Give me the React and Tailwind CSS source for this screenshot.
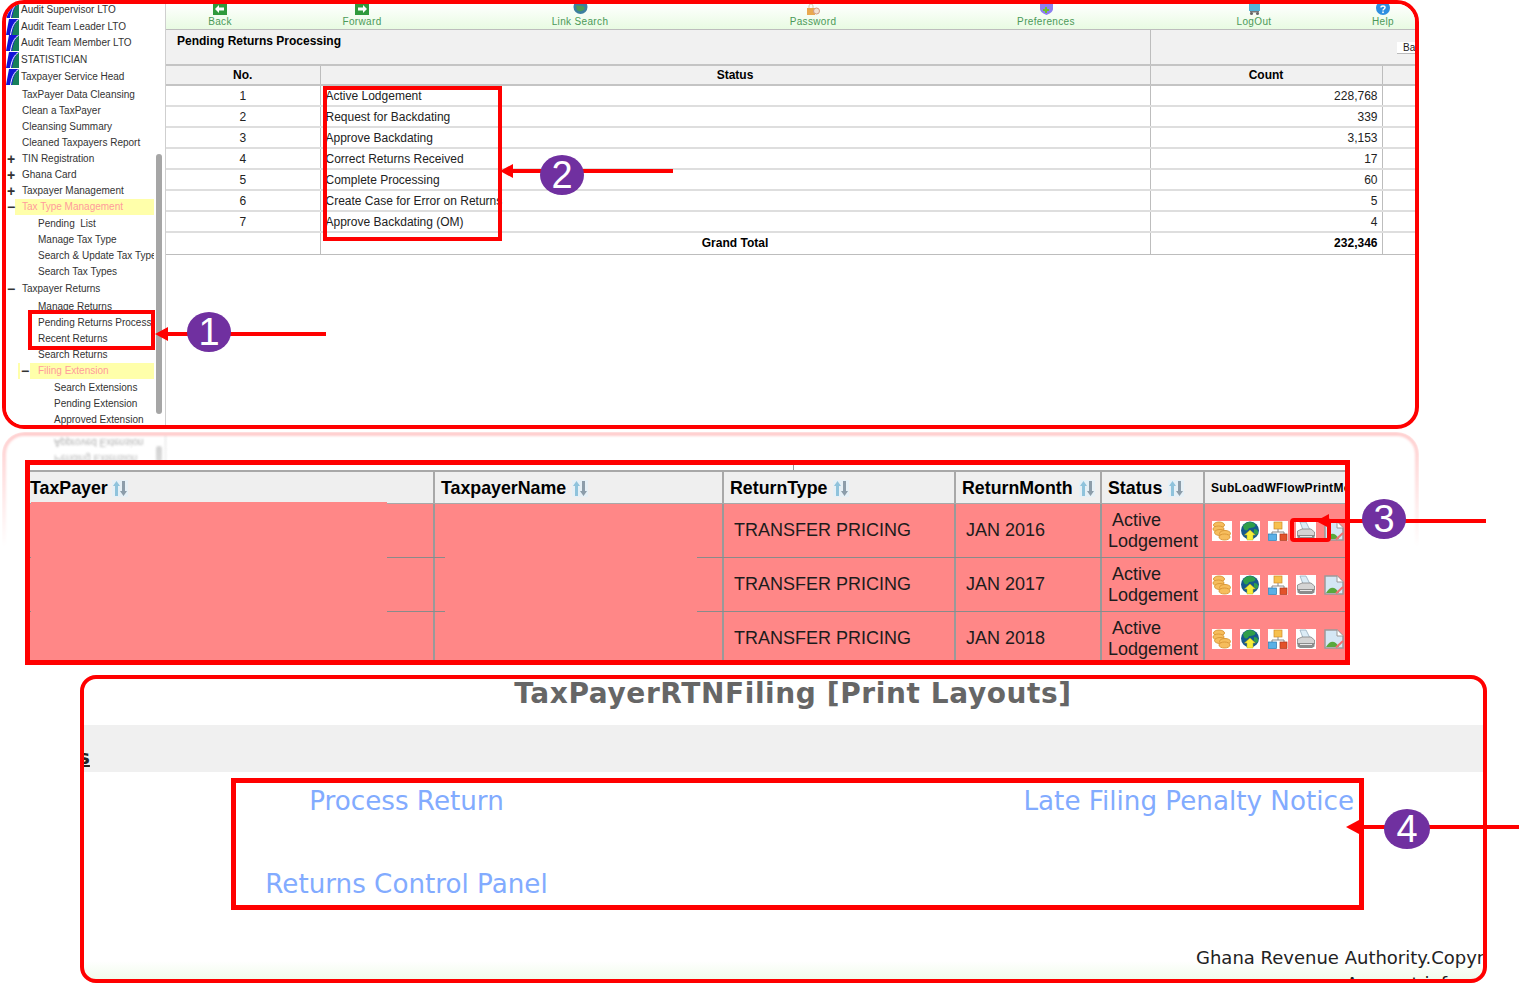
const sans = "[font-family:'Liberation_Sans',Arial,sans-serif]";
const dejavu = "[font-family:'DejaVu_Sans',Verdana,sans-serif]";

const roles = [
  "Audit Supervisor LTO",
  "Audit Team Leader LTO",
  "Audit Team Member LTO",
  "STATISTICIAN",
  "Taxpayer Service Head",
];

const menu = [
  { label: "TaxPayer Data Cleansing", pad: "pl-4" },
  { label: "Clean a TaxPayer", pad: "pl-4" },
  { label: "Cleansing Summary", pad: "pl-4" },
  { label: "Cleaned Taxpayers Report", pad: "pl-4" },
  { label: "TIN Registration", pad: "pl-4", sign: "+" },
  { label: "Ghana Card", pad: "pl-4", sign: "+" },
  { label: "Taxpayer Management", pad: "pl-4", sign: "+" },
  { label: "Tax Type Management", pad: "pl-4", sign: "-", hot: true },
  { label: "Pending  List", pad: "pl-8", gap: "mt-px" },
  { label: "Manage Tax Type", pad: "pl-8" },
  { label: "Search & Update Tax Type", pad: "pl-8" },
  { label: "Search Tax Types", pad: "pl-8" },
  { label: "Taxpayer Returns", pad: "pl-4", sign: "-", gap: "mt-px" },
  { label: "Manage Returns", pad: "pl-8", gap: "mt-0.5" },
  { label: "Pending Returns Processing", pad: "pl-8" },
  { label: "Recent Returns", pad: "pl-8" },
  { label: "Search Returns", pad: "pl-8" },
  { label: "Filing Extension", pad: "pl-8", sign: "-", hot: true, inner: true },
  { label: "Search Extensions", pad: "pl-12", gap: "mt-px" },
  { label: "Pending Extension", pad: "pl-12" },
  { label: "Approved Extension", pad: "pl-12" },
];

const statusRows = [
  ["1", "Active Lodgement", "228,768"],
  ["2", "Request for Backdating", "339"],
  ["3", "Approve Backdating", "3,153"],
  ["4", "Correct Returns Received", "17"],
  ["5", "Complete Processing", "60"],
  ["6", "Create Case for Error on Returns", "5"],
  ["7", "Approve Backdating (OM)", "4"],
];

const months = ["JAN 2016", "JAN 2017", "JAN 2018"];

function RoleIcon() {
  return (
    <svg width="13" height="16" viewBox="0 0 13 16" className="shrink-0">
      <path d="M3 0H13V16H0Z" fill="#1414d8" />
      <path d="M13 0C9 3 7 9 6 16H13Z" fill="#16805c" />
      <path d="M12.500 0.500C8 3 5.500 9 4.500 16" stroke="#fff" strokeWidth="1" fill="none" />
    </svg>
  );
}

function TopIcon({ kind }) {
  if (kind === "back" || kind === "forward") {
    return (
      <svg width="14" height="11" viewBox="0 0 14 11">
        <rect width="14" height="11" fill="#2f9a3c" />
        {kind === "back" ? (
          <path d="M2 5L6 1V3.500H11V6.500H6V9Z" fill="#fff" />
        ) : (
          <path d="M12 5L8 1V3.500H3V6.500H8V9Z" fill="#fff" />
        )}
      </svg>
    );
  }
  if (kind === "search") {
    return (
      <svg width="15" height="11" viewBox="0 0 15 11">
        <circle cx="7.500" cy="3" r="7" fill="#3c7fa0" />
        <path d="M3 1C6 3 9 0 12 4C10 8 6 8 4 6Z" fill="#4f9a58" />
      </svg>
    );
  }
  if (kind === "password") {
    return (
      <svg width="14" height="11" viewBox="0 0 14 11">
        <rect x="1" y="4" width="8" height="7" fill="#e9a94f" />
        <path d="M3 4V2a2 2 0 0 1 4 0V4" stroke="#d8c8a8" fill="none" />
        <circle cx="10.500" cy="7" r="3" fill="#f3e3d3" stroke="#d09a80" />
      </svg>
    );
  }
  if (kind === "prefs") {
    return (
      <svg width="13" height="11" viewBox="0 0 13 11">
        <path d="M0 0H13V5C13 8 9 10 6.500 11C4 10 0 8 0 5Z" fill="#8d7ff0" />
        <path d="M3 5H5V3H7V5H9V7H7V9H5V7H3Z" fill="#6cc02c" />
      </svg>
    );
  }
  if (kind === "logout") {
    return (
      <svg width="13" height="11" viewBox="0 0 13 11">
        <rect x="1" width="11" height="7" fill="#54b4d8" />
        <rect x="2" y="7" width="9" height="1.500" fill="#777" />
        <circle cx="3.500" cy="9.500" r="1.500" fill="#666" />
        <circle cx="9.500" cy="9.500" r="1.500" fill="#666" />
      </svg>
    );
  }
  return (
    <svg width="14" height="11" viewBox="0 0 14 11">
      <circle cx="7" cy="4" r="7" fill="#2f8fe0" />
      <path d="M5 3.500C5 1.500 9 1.500 9 3.500C9 5 7 5 7 6.500" stroke="#fff" strokeWidth="1.500" fill="none" />
      <rect x="6.200" y="7.500" width="1.600" height="1.600" fill="#fff" />
    </svg>
  );
}

function SortIcon() {
  return (
    <svg width="16" height="17" viewBox="0 0 16 17" className="shrink-0 bg-[#e6f0f6]">
      <path d="M4.500 1L8 6H6V16H3V6H1Z" fill="#8fc3dc" />
      <path d="M11.500 16L8 11H10V1H13V11H15Z" fill="#8c9daa" />
    </svg>
  );
}

function CoinsIcon() {
  return (
    <svg width="20" height="20" viewBox="0 0 20 20" className="bg-white">
      <ellipse cx="7" cy="4" rx="5.500" ry="3" fill="#f6bd5c" stroke="#dc9a3a" />
      <ellipse cx="6.500" cy="8" rx="5.500" ry="3" fill="#f6bd5c" stroke="#dc9a3a" />
      <ellipse cx="8" cy="11.500" rx="5.500" ry="3" fill="#f6bd5c" stroke="#dc9a3a" />
      <ellipse cx="13" cy="12.500" rx="5.500" ry="3" fill="#f6bd5c" stroke="#dc9a3a" />
      <ellipse cx="12.500" cy="16" rx="5.500" ry="3" fill="#f6bd5c" stroke="#dc9a3a" />
    </svg>
  );
}

function GlobeIcon() {
  return (
    <svg width="20" height="20" viewBox="0 0 20 20" className="bg-white">
      <circle cx="10" cy="9.500" r="9" fill="#14598c" />
      <path d="M3 5C6 0 12 0 15 3C17 6 12 7 9 7C8 10 4 11 3 5Z" fill="#2f9e4a" />
      <path d="M14 8C18 8 19 11 17 14L14 12Z" fill="#2f9e4a" />
      <path d="M10 9L15.500 14H13V19H7V14H4.500Z" fill="#f5ee3a" stroke="#b8aa20" strokeWidth=".5" />
    </svg>
  );
}

function FlowIcon() {
  return (
    <svg width="20" height="20" viewBox="0 0 20 20" className="bg-white">
      <rect x="6" y="1" width="8" height="7" fill="#f6c04e" stroke="#d08a2a" strokeWidth=".7" />
      <path d="M10 8V11M4 13V11H16V13" stroke="#888" fill="none" />
      <rect x="0.500" y="13" width="8" height="6.500" fill="#5ab0e6" stroke="#2a78b0" strokeWidth=".7" />
      <rect x="12" y="13" width="7" height="6.500" fill="#e2522a" stroke="#b03418" strokeWidth=".7" />
    </svg>
  );
}

function PrinterIcon() {
  return (
    <svg width="20" height="20" viewBox="0 0 20 20" className="bg-white">
      <path d="M4 1H10L14 9H7Z" fill="#dcecf6" stroke="#8aa4b4" strokeWidth=".7" />
      <path d="M1.500 10L6 8H15L18.500 11V15H1.500Z" fill="#d4d4d4" stroke="#777" strokeWidth=".7" />
      <path d="M1.500 14H18.500V17.500L16 19H4L1.500 17.500Z" fill="#8c8c8c" />
      <path d="M4 15.500H16" stroke="#e8e8e8" />
    </svg>
  );
}

function BrokenImageIcon() {
  return (
    <svg width="20" height="20" viewBox="0 0 20 20" className="shrink-0">
      <path d="M1 1H13L19 7V19H1Z" fill="#d5e7f4" stroke="#9a9a9a" strokeWidth="1.500" />
      <path d="M13 1V7H19" fill="#fff" stroke="#9a9a9a" />
      <path d="M2 18C6 11 11 11 15 18Z" fill="#5aa83c" />
      <path d="M12 18.500L19 12" stroke="#f07070" strokeWidth="2" />
    </svg>
  );
}

function Sidebar() {
  return (
    <aside className="relative w-40 shrink-0 border-r border-[#cfcfcf] bg-white">
      <div className="-mt-0.5 w-[148px] overflow-hidden text-[10px] leading-4 text-[#333]">
        {roles.map((role) => (
          <div key={role} className="flex h-[16.6px] items-center gap-0.5 whitespace-nowrap">
            <RoleIcon />
            {role}
          </div>
        ))}
        <div className="h-0.5" />
        {menu.map((item) => (
          <div
            key={item.label}
            className={`relative h-4 overflow-hidden whitespace-pre ${item.pad} ${item.gap || ""} ${
              item.hot ? "text-[#ff9c9c]" : ""
            }`}
          >
            {item.hot && (
              <div className={`absolute inset-y-0 right-0 bg-[#ffffaa] ${item.inner ? "left-3" : "left-[9px]"}`} />
            )}
            {item.sign && (
              <span
                className={`absolute top-0 w-[10px] text-center text-[14px] font-bold leading-4 text-[#333] ${
                  item.inner ? "left-3.5 bg-white" : "left-0"
                }`}
              >
                {item.sign === "-" ? "−" : "+"}
              </span>
            )}
            <span className="relative">{item.label}</span>
          </div>
        ))}
      </div>
      <div className="absolute left-[150px] top-[150px] h-[260px] w-1.5 rounded-full bg-[#a6a6a6]" />
    </aside>
  );
}

function Toolbar() {
  const items = [
    ["Back", "back"],
    ["Forward", "forward"],
    ["Link Search", "search"],
    ["Password", "password"],
    ["Preferences", "prefs"],
    ["LogOut", "logout"],
    ["Help", "help"],
  ];
  return (
    <div className="grid h-[26px] w-[1267px] grid-cols-[108px_176px_260px_206px_260px_156px_102px] border-b border-[#bdbdbd] bg-gradient-to-b from-white to-[#e8fbe2]">
      {items.map(([label, kind]) => (
        <div key={label} className="flex flex-col items-center">
          <TopIcon kind={kind} />
          <span className="mt-px text-[10px] leading-3 tracking-[0.35px] text-[#4b9a58]">{label}</span>
        </div>
      ))}
    </div>
  );
}

function StatusTable() {
  return (
    <table className="w-[1249px] table-fixed border-collapse text-xs text-[#222]">
      <colgroup>
        <col className="w-[154px]" />
        <col className="w-[830px]" />
        <col className="w-[232px]" />
        <col />
      </colgroup>
      <thead>
        <tr className="h-5 border-y-2 border-[#c4c4c4] bg-[#f1f1f1] font-bold text-black">
          <th className="p-0">No.</th>
          <th className="border-l border-[#bdbdbd] p-0">Status</th>
          <th className="border-l border-[#bdbdbd] p-0">Count</th>
          <th className="border-l border-[#bdbdbd] p-0" />
        </tr>
      </thead>
      <tbody>
        {statusRows.map(([no, status, count]) => (
          <tr key={no} className="h-[21px] border-b-2 border-[#dedede]">
            <td className="p-0 text-center">{no}</td>
            <td className="overflow-hidden whitespace-nowrap border-l border-[#bdbdbd] p-0 pl-[5px]">{status}</td>
            <td className="border-l border-[#bdbdbd] p-0 pr-1 text-right">{count}</td>
            <td className="border-l border-[#bdbdbd] p-0" />
          </tr>
        ))}
        <tr className="h-[22px] border-b border-[#bdbdbd] font-bold text-black">
          <td className="p-0" />
          <td className="border-l border-[#bdbdbd] p-0 text-center">Grand Total</td>
          <td className="border-l border-[#bdbdbd] p-0 pr-1 text-right">232,346</td>
          <td className="border-l border-[#bdbdbd] p-0" />
        </tr>
      </tbody>
    </table>
  );
}

function ProcessingPanel() {
  return (
    <section className="relative ml-0.5 flex h-[429px] w-[1417px] overflow-hidden rounded-[22px] border-4 border-[#ff0000] bg-white">
      <Sidebar />
      <div className="w-[1249px] overflow-hidden">
        <Toolbar />
        <div className="flex h-[34px] w-[1249px] bg-[#f1f1f1]">
          <div className="w-[984px] pl-[11px] pt-[3px] text-xs font-bold text-black">Pending Returns Processing</div>
          <div className="flex flex-1 justify-end border-l border-[#bdbdbd] pt-3">
            <span className="h-3 w-[18px] overflow-hidden border-b border-[#bbb] bg-white pl-1.5 text-[10px] leading-3 text-[#222]">
              Back
            </span>
          </div>
        </div>
        <StatusTable />
      </div>
    </section>
  );
}

function HeaderCell({ label, wide }) {
  return (
    <div className={`flex items-center border-r-2 border-[#a8a8a8] pt-px ${wide ? "gap-1 pl-0" : "gap-1.5 pl-1.5"}`}>
      <span className="text-[17.8px] font-bold text-black">{label}</span>
      <SortIcon />
    </div>
  );
}

function ReturnsTable() {
  const cols = "grid grid-cols-[405px_289px_232px_146px_103px_140px]";
  return (
    <section className="relative ml-[25px] mt-[31px] h-[205px] w-[1325px] overflow-hidden border-[5px] border-[#ff0000] bg-white">
      <div className="absolute left-[763px] top-0 h-[5px] w-px bg-[#999]" />
      <div className={`${cols} mt-[5px] h-[34px] border-y border-t-2 border-[#a8a8a8] bg-[#efefef]`}>
        <HeaderCell label="TaxPayer" wide />
        <HeaderCell label="TaxpayerName" />
        <HeaderCell label="ReturnType" />
        <HeaderCell label="ReturnMonth" />
        <HeaderCell label="Status" />
        <div className="flex items-center overflow-hidden whitespace-nowrap pl-1.5 text-xs font-bold tracking-[0.3px] text-black">
          SubLoadWFlowPrintModify
        </div>
      </div>
      {months.map((month) => (
        <div key={month} className={`${cols} h-[54px] border-b border-[#8a8a8a] bg-[#ff8787] text-lg text-[#1c1c1c]`}>
          <div className="border-r-2 border-[#999]" />
          <div className="border-r-2 border-[#999]" />
          <div className="flex items-center border-r-2 border-[#999] pb-px pl-2.5">TRANSFER PRICING</div>
          <div className="flex items-center border-r-2 border-[#999] pb-px pl-2.5">{month}</div>
          <div className="flex flex-col justify-center border-r-2 border-[#999] pl-1.5 leading-[21px]">
            <span className="pl-1">Active</span>
            <span>Lodgement</span>
          </div>
          <div className="flex items-center gap-2 overflow-hidden pl-[7px]">
            <CoinsIcon />
            <GlobeIcon />
            <FlowIcon />
            <PrinterIcon />
            <BrokenImageIcon />
          </div>
        </div>
      ))}
      {/* blanked out taxpayer details */}
      <div className="absolute left-px top-[37px] h-[160px] w-[356px] bg-[#ff8787]" />
      <div className="absolute left-[415px] top-10 h-[160px] w-[252px] bg-[#ff8787]" />
    </section>
  );
}

function PrintLayouts() {
  return (
    <section className="relative ml-20 mt-2.5 h-[308px] w-[1407px] overflow-hidden rounded-2xl border-4 border-[#ff0000] bg-gradient-to-b from-white from-[94%] to-[#f1fcec]">
      <h1 className={`${dejavu} h-[46px] whitespace-nowrap pt-px text-center text-[28px] font-bold leading-[28px] tracking-[0.6px] text-[#666]`}>
        <span className="ml-[19px]">TaxPayerRTNFiling [Print Layouts]</span>
      </h1>
      <div className="h-[47px] bg-[#f0f0f0] pt-[22px]">
        <span className={`${dejavu} -ml-1.5 block text-[20px] font-bold leading-[20px] text-[#222] underline`}>s</span>
      </div>
      <div className={`${dejavu} ml-[147px] mt-1.5 grid h-[132px] w-[1133px] grid-cols-[341px_1fr] grid-rows-2 border-[5px] border-[#ff0000] text-[26.2px] leading-[36px] text-[#82abff]`}>
        <a className="text-center">Process Return</a>
        <a className="pr-[5px] text-right">Late Filing Penalty Notice</a>
        <a className="col-start-1 whitespace-nowrap pt-[22px] text-center">Returns Control Panel</a>
      </div>
      <div className={`${dejavu} ml-[1112px] mt-9 whitespace-nowrap text-lg leading-6 text-[#222]`}>
        Ghana Revenue Authority.Copyright
        <div className="ml-[150px] mt-0.5">Account information</div>
      </div>
    </section>
  );
}

function Reflection() {
  return (
    <div className="absolute left-0.5 top-[432px] h-[115px] w-[1417px] overflow-hidden rounded-t-[22px] border-x-4 border-t-4 border-[#ff0000]/20 blur-[1px] [mask-image:linear-gradient(to_bottom,black,transparent)]">
      <div className="absolute left-[159px] top-0 h-12 w-px bg-[#ddd]" />
      <div className="absolute left-12 -top-0.5 -scale-y-100 text-[10px] leading-4 text-[#aaa]">
        <div>Pending Extension</div>
        <div>Approved Extension</div>
      </div>
      <div className="absolute left-[150px] top-2.5 h-4 w-1.5 rounded-full bg-[#ccc]" />
    </div>
  );
}

function Callout({ n, cx, cy, wide, x1, x2, y, tip }) {
  return (
    <>
      <svg className="absolute left-0 top-0" width="1520" height="985">
        <line x1={x1} y1={y} x2={x2} y2={y} stroke="#ff0000" strokeWidth="4" />
        <path d={`M${tip} ${y}L${tip + 13} ${y - 7}V${y + 7}Z`} fill="#ff0000" />
      </svg>
      <div
        className={`absolute flex h-10 items-center justify-center rounded-[50%] bg-[#7030a0] ${sans} text-[38px] leading-none text-white ${wide}`}
        style={{ left: cx, top: cy - 20 }}
      >
        {n}
      </div>
    </>
  );
}

export default function App() {
  return (
    <div className={`relative h-[985px] w-[1520px] overflow-hidden bg-white ${sans}`}>
      <Reflection />
      <ProcessingPanel />
      <ReturnsTable />
      <PrintLayouts />

      {/* annotations */}
      <div className="absolute left-7 top-[310px] h-10 w-[127px] border-4 border-[#ff0000]" />
      <div className="absolute left-[323px] top-[86px] h-[155px] w-[179px] border-4 border-[#ff0000]" />
      <div className="absolute left-[1290px] top-[518px] h-6 w-[41px] rounded-sm border-4 border-[#ff0000]" />
      <Callout n="1" cx={187} cy={332} wide="w-11" x1={166} x2={326} y={334} tip={155} />
      <Callout n="2" cx={540} cy={175} wide="w-11" x1={510} x2={673} y={171} tip={500} />
      <Callout n="3" cx={1362} cy={519} wide="w-11" x1={1320} x2={1486} y={521} tip={1316} />
      <Callout n="4" cx={1384} cy={829} wide="w-[46px]" x1={1356} x2={1519} y={827} tip={1346} />
    </div>
  );
}
